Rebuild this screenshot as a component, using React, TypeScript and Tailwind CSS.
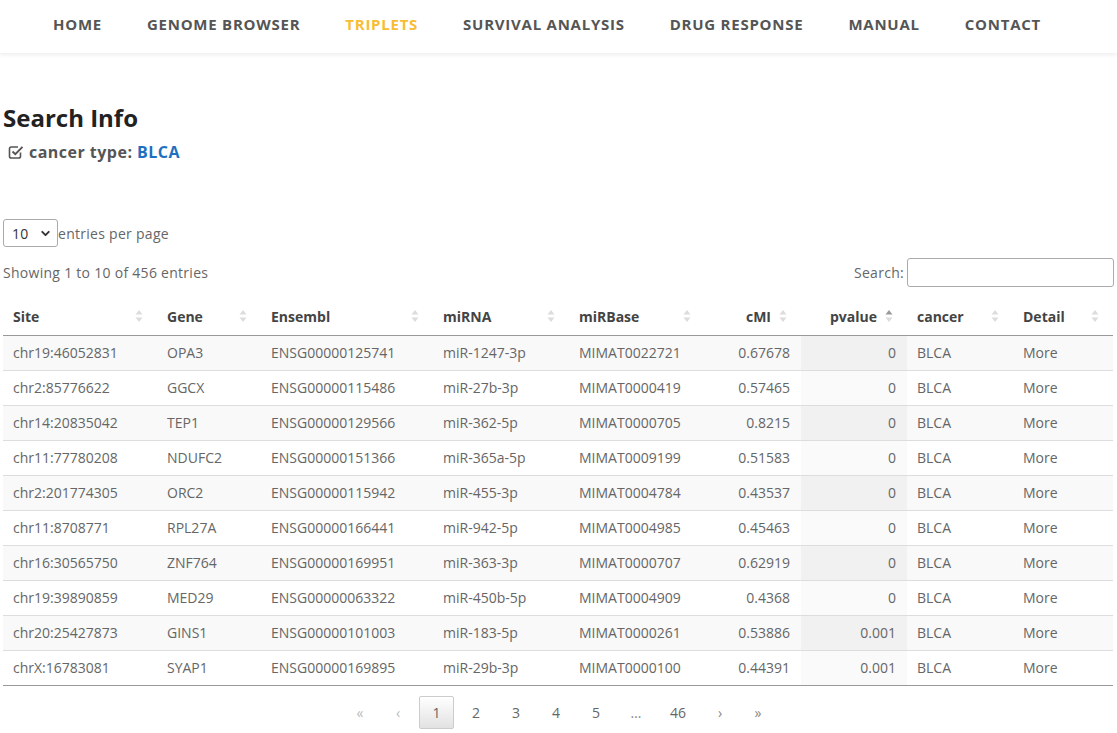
import { ChevronDown } from 'lucide-react'

type Row = {
  site: string
  gene: string
  ensembl: string
  mirna: string
  mirbase: string
  cmi: string
  pvalue: string
  cancer: string
}

const rows: Row[] = [
  { site: 'chr19:46052831', gene: 'OPA3', ensembl: 'ENSG00000125741', mirna: 'miR-1247-3p', mirbase: 'MIMAT0022721', cmi: '0.67678', pvalue: '0', cancer: 'BLCA' },
  { site: 'chr2:85776622', gene: 'GGCX', ensembl: 'ENSG00000115486', mirna: 'miR-27b-3p', mirbase: 'MIMAT0000419', cmi: '0.57465', pvalue: '0', cancer: 'BLCA' },
  { site: 'chr14:20835042', gene: 'TEP1', ensembl: 'ENSG00000129566', mirna: 'miR-362-5p', mirbase: 'MIMAT0000705', cmi: '0.8215', pvalue: '0', cancer: 'BLCA' },
  { site: 'chr11:77780208', gene: 'NDUFC2', ensembl: 'ENSG00000151366', mirna: 'miR-365a-5p', mirbase: 'MIMAT0009199', cmi: '0.51583', pvalue: '0', cancer: 'BLCA' },
  { site: 'chr2:201774305', gene: 'ORC2', ensembl: 'ENSG00000115942', mirna: 'miR-455-3p', mirbase: 'MIMAT0004784', cmi: '0.43537', pvalue: '0', cancer: 'BLCA' },
  { site: 'chr11:8708771', gene: 'RPL27A', ensembl: 'ENSG00000166441', mirna: 'miR-942-5p', mirbase: 'MIMAT0004985', cmi: '0.45463', pvalue: '0', cancer: 'BLCA' },
  { site: 'chr16:30565750', gene: 'ZNF764', ensembl: 'ENSG00000169951', mirna: 'miR-363-3p', mirbase: 'MIMAT0000707', cmi: '0.62919', pvalue: '0', cancer: 'BLCA' },
  { site: 'chr19:39890859', gene: 'MED29', ensembl: 'ENSG00000063322', mirna: 'miR-450b-5p', mirbase: 'MIMAT0004909', cmi: '0.4368', pvalue: '0', cancer: 'BLCA' },
  { site: 'chr20:25427873', gene: 'GINS1', ensembl: 'ENSG00000101003', mirna: 'miR-183-5p', mirbase: 'MIMAT0000261', cmi: '0.53886', pvalue: '0.001', cancer: 'BLCA' },
  { site: 'chrX:16783081', gene: 'SYAP1', ensembl: 'ENSG00000169895', mirna: 'miR-29b-3p', mirbase: 'MIMAT0000100', cmi: '0.44391', pvalue: '0.001', cancer: 'BLCA' },
]

const navItems = ['Home', 'Genome Browser', 'Triplets', 'Survival Analysis', 'Drug Response', 'Manual', 'Contact']

const columns = [
  { label: 'Site', width: 'w-[154px]', right: false },
  { label: 'Gene', width: 'w-[104px]', right: false },
  { label: 'Ensembl', width: 'w-[172px]', right: false },
  { label: 'miRNA', width: 'w-[136px]', right: false },
  { label: 'miRBase', width: 'w-[136px]', right: false },
  { label: 'cMI', width: 'w-[96px]', right: true },
  { label: 'pvalue', width: 'w-[106px]', right: true },
  { label: 'cancer', width: 'w-[106px]', right: false },
  { label: 'Detail', width: 'w-[100px]', right: false },
]

const SortIcon = ({ active }: { active?: boolean }) => (
  <svg width="8" height="13" viewBox="0 0 8 13" className="absolute right-[14px] top-1/2 -translate-y-1/2">
    <path d="M4 0.5 L7.5 5 L0.5 5 Z" fill={active ? '#9a9a9a' : '#dcdcdc'} />
    <path d="M4 12.5 L7.5 8 L0.5 8 Z" fill="#dcdcdc" />
  </svg>
)

const CheckSquare = () => (
  <svg width="16" height="16" viewBox="0 0 16 16" className="mr-[5px]">
    <path
      d="M12.5 8.5 V12.2 A1.8 1.8 0 0 1 10.7 14 H3.3 A1.8 1.8 0 0 1 1.5 12.2 V4.8 A1.8 1.8 0 0 1 3.3 3 H10"
      fill="none"
      stroke="#555"
      strokeWidth="1.6"
    />
    <path d="M4.5 7.5 L7.3 10.2 L14.5 2.8" fill="none" stroke="#555" strokeWidth="1.9" />
  </svg>
)

const App = () => {
  return (
    <div className="min-h-screen bg-white font-['Open_Sans',sans-serif] text-[#666]">
      <nav className="flex h-[53px] items-center gap-[45px] pb-[4px] pl-[53px] shadow-[0_2px_4px_rgba(0,0,0,0.07)]">
        {navItems.map((item) => (
          <span
            key={item}
            className={`text-[15px] font-bold uppercase tracking-[0.05em] ${
              item === 'Triplets' ? 'text-[#f7bd33]' : 'text-[#555]'
            }`}
          >
            {item}
          </span>
        ))}
      </nav>

      <div className="px-[3px]">
        <h1 className="mt-[49px] text-[24px] font-bold leading-[32px] text-[#222]">Search Info</h1>
        <p className="mt-[8px] flex items-center pl-[5px] text-[16px] font-bold leading-[20px] tracking-[0.03em] text-[#555]">
          <CheckSquare />
          cancer type:&nbsp;<span className="text-[#1d6fbf]">BLCA</span>
        </p>

        <div className="mt-[57px] flex items-center text-[14px] tracking-[0.02em]">
          <div className="flex h-[28px] w-[55px] items-center justify-between rounded-[3px] border border-[#aaa] pl-[8px] pr-[5px] text-[#333]">
            <span>10</span>
            <ChevronDown size={13} strokeWidth={3.5} />
          </div>
          <span>entries per page</span>
        </div>

        <div className="mt-[11px] flex items-center justify-between text-[14px] tracking-[0.02em]">
          <span>Showing 1 to 10 of 456 entries</span>
          <label className="flex items-center">
            Search:
            <span className="ml-[3px] h-[29px] w-[207px] rounded-[3px] border border-[#aaa] bg-white" />
          </label>
        </div>

        <table className="mt-[11px] w-[1110px] table-fixed border-collapse text-[14px]">
          <colgroup>
            {columns.map((c) => (
              <col key={c.label} className={c.width} />
            ))}
          </colgroup>
          <thead>
            <tr className="h-[37px] border-b border-[#999]">
              {columns.map((c) => (
                <th
                  key={c.label}
                  className={`relative py-0 pl-[10px] pr-[30px] font-bold text-[#444] ${
                    c.right ? 'text-right' : 'text-left'
                  }`}
                >
                  {c.label}
                  <SortIcon active={c.label === 'pvalue'} />
                </th>
              ))}
            </tr>
          </thead>
          <tbody>
            {rows.map((r, i) => {
              const odd = i % 2 === 0
              return (
                <tr
                  key={r.site}
                  className={`h-[35px] border-t border-[#ddd] ${i === rows.length - 1 ? 'border-b border-b-[#999]' : ''} ${
                    odd ? 'bg-[#f9f9f9]' : 'bg-white'
                  }`}
                >
                  <td className="px-[10px]">{r.site}</td>
                  <td className="px-[10px]">{r.gene}</td>
                  <td className="px-[10px]">{r.ensembl}</td>
                  <td className="px-[10px]">{r.mirna}</td>
                  <td className="px-[10px]">{r.mirbase}</td>
                  <td className="px-[11px] text-right">{r.cmi}</td>
                  <td className={`px-[11px] text-right ${odd ? 'bg-[#f1f1f1]' : 'bg-[#fafafa]'}`}>{r.pvalue}</td>
                  <td className="px-[10px]">{r.cancer}</td>
                  <td className="px-[10px]">More</td>
                </tr>
              )
            })}
          </tbody>
        </table>

        <div className="mt-[10px] flex items-center justify-center text-[14px]">
          <span className="w-[38px] text-center text-[#bbb]">«</span>
          <span className="w-[38px] text-center text-[#bbb]">‹</span>
          <span className="mx-[2px] flex h-[33px] w-[35px] items-center justify-center rounded-[2px] border border-[#ccc] bg-gradient-to-b from-white to-[#e2e2e2] text-[#666]">
            1
          </span>
          {['2', '3', '4', '5', '…', '46'].map((p) => (
            <span key={p} className={`text-center ${p === '46' ? 'w-[44px]' : 'w-[40px]'} ${p === '…' ? 'text-[#888]' : ''}`}>
              {p}
            </span>
          ))}
          <span className="w-[40px] text-center text-[#888]">›</span>
          <span className="w-[36px] text-center text-[#888]">»</span>
        </div>
      </div>
    </div>
  )
}

export default App
